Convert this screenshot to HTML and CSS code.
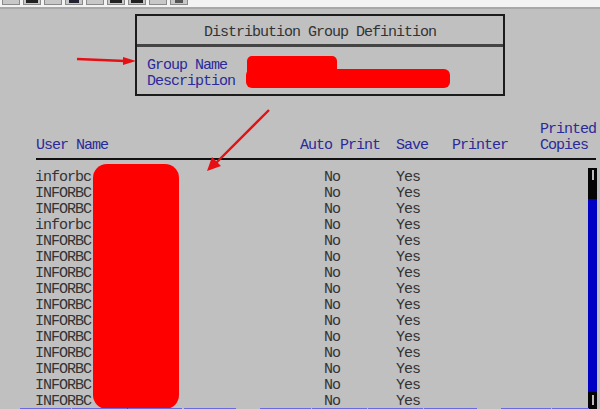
FILE: index.html
```html
<!DOCTYPE html>
<html lang="en">
<head>
<meta charset="utf-8">
<title>Distribution Group Definition</title>
<link rel="stylesheet" href="styles.css">
</head>
<body>
<div class="screen">
  <div class="toolbar">
    <span class="tool"></span><span class="tool dark"></span><span class="tool"></span><span class="tool navy"></span><span class="tool"></span><span class="tool dark"></span><span class="tool dark"></span><span class="tool"></span><span class="tool glyph"></span>
  </div>
  <div class="dialog">
    <div class="dialog-title">Distribution Group Definition</div>
    <div class="dialog-fields">
      <div>Group Name</div>
      <div>Description</div>
    </div>
  </div>
  <div class="table-head">
    <div class="col-user">User Name</div>
    <div class="col-auto">Auto Print</div>
    <div class="col-save">Save</div>
    <div class="col-printer">Printer</div>
    <div class="col-copies">Printed<br>Copies</div>
  </div>
  <div class="table-wrap">
    <div class="rows">
      <div class="row"><span>inforbc</span><span>No</span><span>Yes</span></div>
      <div class="row"><span>INFORBC</span><span>No</span><span>Yes</span></div>
      <div class="row"><span>INFORBC</span><span>No</span><span>Yes</span></div>
      <div class="row"><span>inforbc</span><span>No</span><span>Yes</span></div>
      <div class="row"><span>INFORBC</span><span>No</span><span>Yes</span></div>
      <div class="row"><span>INFORBC</span><span>No</span><span>Yes</span></div>
      <div class="row"><span>INFORBC</span><span>No</span><span>Yes</span></div>
      <div class="row"><span>INFORBC</span><span>No</span><span>Yes</span></div>
      <div class="row"><span>INFORBC</span><span>No</span><span>Yes</span></div>
      <div class="row"><span>INFORBC</span><span>No</span><span>Yes</span></div>
      <div class="row"><span>INFORBC</span><span>No</span><span>Yes</span></div>
      <div class="row"><span>INFORBC</span><span>No</span><span>Yes</span></div>
      <div class="row"><span>INFORBC</span><span>No</span><span>Yes</span></div>
      <div class="row"><span>INFORBC</span><span>No</span><span>Yes</span></div>
      <div class="row"><span>INFORBC</span><span>No</span><span>Yes</span></div>
    </div>
    <div class="scrollbar">
      <div class="scroll-end"><i class="tick"></i></div>
      <div class="scroll-track"></div>
      <div class="scroll-end bottom"><i class="tick"></i></div>
    </div>
  </div>
  <div class="redact name-mark"></div>
  <div class="redact desc-mark"></div>
  <div class="redact user-mark"></div>
  <svg class="arrows" width="600" height="409" viewBox="0 0 600 409" aria-hidden="true">
    <path class="shaft" d="M77 59 L125 61"/>
    <path class="head" d="M136 61 L123 57 L123 65 Z"/>
    <path class="shaft" d="M269 110 L216 163"/>
    <path class="head" d="M207 171 L212 157 L221 166 Z"/>
  </svg>
  <div class="bottom-line">
    <span class="seg s1"></span><span class="seg s2"></span><span class="seg s3"></span><span class="seg s4"></span><span class="seg s5"></span><span class="seg s6"></span><span class="seg s7"></span><span class="seg s8"></span><span class="seg s9"></span><span class="seg s10"></span>
  </div>
</div>
</body>
</html>
```
FILE: styles.css
```css
* { box-sizing: border-box; }
html, body { margin: 0; padding: 0; }
body { width: 600px; height: 409px; overflow: hidden; background: #c0c0c0; }
.screen {
  position: relative;
  width: 600px;
  height: 409px;
  overflow: hidden;
  background: #c0c0c0;
  font-family: "Liberation Mono", "DejaVu Sans Mono", monospace;
  font-size: 15px;
  letter-spacing: -1px;
  line-height: 16px;
  color: #333;
}
.toolbar {
  display: flex;
  gap: 3px;
  height: 9px;
  background: #f3f3f3;
  border-bottom: 2px solid #a8a8a8;
  padding-left: 2px;
}
.tool {
  width: 18px;
  height: 5px;
  background-color: #c8c8c8;
  border: 1px solid #8a8a8a;
  border-top: 0;
}
.tool.dark { background-image: linear-gradient(#222, #222); background-size: 12px 3px; background-position: 2px 0; background-repeat: no-repeat; }
.tool.navy { background-image: linear-gradient(#223, #223); background-size: 10px 3px; background-position: 3px 0; background-repeat: no-repeat; }
.tool.glyph { background-image: linear-gradient(#555, #555); background-size: 8px 3px; background-position: 4px 0; background-repeat: no-repeat; }
.dialog {
  width: 370px;
  height: 82px;
  margin: 5px 0 0 135px;
  border: 2px solid #1c1c1c;
}
.dialog-title {
  height: 31px;
  padding-top: 9px;
  text-align: center;
  border-bottom: 3px solid #444;
}
.dialog-fields {
  padding: 11px 0 0 10px;
  color: #2a2a9a;
}
.table-head {
  display: grid;
  grid-template-columns: 264px 96px 56px 88px 1fr;
  align-items: end;
  height: 64px;
  margin-left: 36px;
  padding-bottom: 4px;
  color: #2a2a9a;
  border-bottom: 2px solid #111;
  width: 560px;
}
.table-wrap {
  display: flex;
  justify-content: space-between;
  width: 597px;
  margin-top: 8px;
  height: 241px;
}
.rows { padding-top: 2px; margin-left: 35px; }
.row {
  display: grid;
  grid-template-columns: 289px 72px 60px;
  height: 16px;
}
.scrollbar {
  display: flex;
  flex-direction: column;
  width: 9px;
  height: 241px;
}
.scroll-end {
  display: flex;
  justify-content: center;
  height: 31px;
  padding-top: 2px;
  background: #050505;
}
.scroll-end.bottom { height: 17px; padding-top: 3px; }
.tick { width: 2px; height: 10px; background: #bdbdbd; }
.scroll-track { flex: 1; background: #0000c4; }
.redact { position: absolute; background: #fe0000; }
.name-mark { left: 247px; top: 56px; width: 90px; height: 20px; border-radius: 5px; }
.desc-mark { left: 246px; top: 69px; width: 204px; height: 19px; border-radius: 6px; }
.user-mark { left: 93px; top: 164px; width: 86px; height: 245px; border-radius: 14px; }
.arrows { position: absolute; left: 0; top: 0; }
.shaft { fill: none; stroke: #e60f14; stroke-width: 2.4; }
.head { fill: #e60f14; }
.bottom-line { position: absolute; left: 0; right: 0; bottom: 0; height: 1px; }
.seg { position: absolute; top: 0; height: 1px; background: #6a6ae0; }
.s1 { left: 20px; width: 51px; }
.s2 { left: 72px; width: 55px; }
.s3 { left: 128px; width: 54px; }
.s4 { left: 184px; width: 52px; }
.s5 { left: 260px; width: 51px; }
.s6 { left: 312px; width: 55px; }
.s7 { left: 368px; width: 55px; }
.s8 { left: 424px; width: 53px; }
.s9 { left: 501px; width: 50px; }
.s10 { left: 552px; width: 37px; }
```
